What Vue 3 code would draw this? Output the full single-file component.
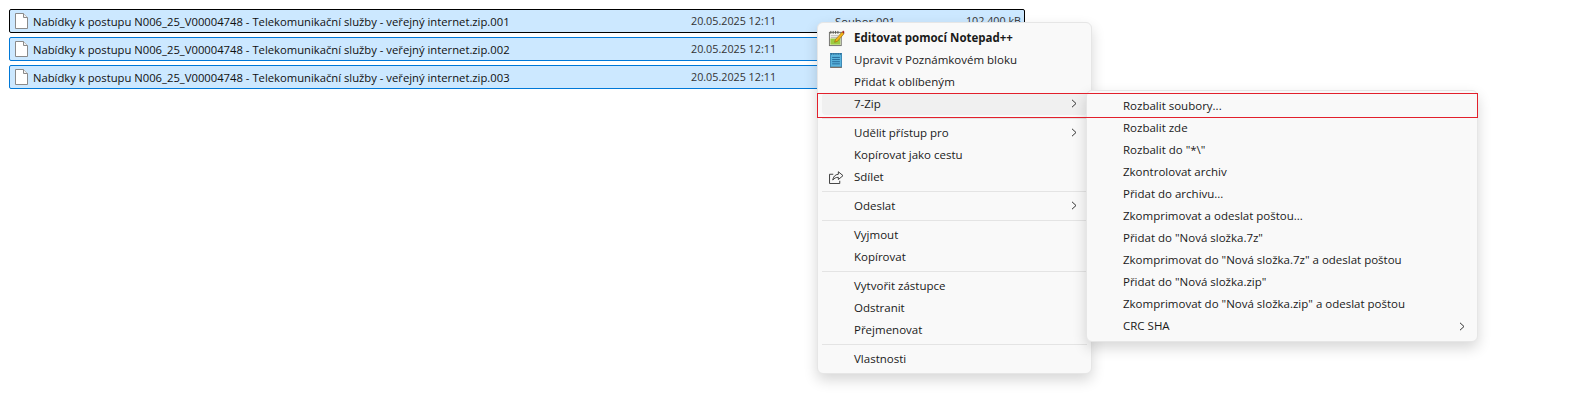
<script setup>
const rows = ['001', '002', '003'];
const name = 'Nabídky k postupu N006_25_V00004748 - Telekomunikační služby - veřejný internet.zip.';
const mainMenu = [
  { label: 'Editovat pomocí Notepad++', icon: 'npp', bold: true },
  { label: 'Upravit v Poznámkovém bloku', icon: 'note' },
  { label: 'Přidat k oblíbeným' },
  { label: '7-Zip', sub: true, active: true },
  { sep: true },
  { label: 'Udělit přístup pro', sub: true },
  { label: 'Kopírovat jako cestu' },
  { label: 'Sdílet', icon: 'share' },
  { sep: true },
  { label: 'Odeslat', sub: true },
  { sep: true },
  { label: 'Vyjmout' },
  { label: 'Kopírovat' },
  { sep: true },
  { label: 'Vytvořit zástupce' },
  { label: 'Odstranit' },
  { label: 'Přejmenovat' },
  { sep: true },
  { label: 'Vlastnosti' },
];
const subMenu = [
  { label: 'Rozbalit soubory...' },
  { label: 'Rozbalit zde' },
  { label: 'Rozbalit do "*\\"' },
  { label: 'Zkontrolovat archiv' },
  { label: 'Přidat do archivu...' },
  { label: 'Zkomprimovat a odeslat poštou...' },
  { label: 'Přidat do "Nová složka.7z"' },
  { label: 'Zkomprimovat do "Nová složka.7z" a odeslat poštou' },
  { label: 'Přidat do "Nová složka.zip"' },
  { label: 'Zkomprimovat do "Nová složka.zip" a odeslat poštou' },
  { label: 'CRC SHA', sub: true },
];
</script>

<template>
  <div class="page">
    <div class="list">
      <div v-for="(r, i) in rows" :key="r" class="row" :class="{ focused: i === 0 }">
        <svg class="file" width="13" height="16" viewBox="0 0 13 16">
          <path d="M.5.5h8l4 4v11H.5z" fill="#fff" stroke="#8a8a8a" />
          <path d="M8.5.5v4h4" fill="#f2f2f2" stroke="#8a8a8a" />
        </svg>
        <span class="name">{{ name + r }}</span>
        <span class="date">20.05.2025 12:11</span>
        <template v-if="i === 0">
          <span class="type">Soubor {{ r }}</span>
          <span class="size">102 400 kB</span>
        </template>
      </div>
    </div>

    <div class="menu main">
      <template v-for="(m, i) in mainMenu" :key="i">
        <div v-if="m.sep" class="sep"></div>
        <div v-else class="item" :class="{ active: m.active, bold: m.bold }">
          <span class="ico">
            <svg v-if="m.icon === 'npp'" width="17" height="17" viewBox="0 0 18 18">
              <rect x="1.500" y="2.500" width="12.500" height="14" fill="#f4f4ee" stroke="#6f6f6a" />
              <rect x="2.500" y="9" width="10.500" height="6.500" fill="#9ccb3f" />
              <path d="M3 1v3M5.500 1v3M8 1v3M10.500 1v3" stroke="#55554f" />
              <path d="M3 6h8M3 8h7" stroke="#b9b9b0" />
              <path d="M7 13l1-3 7-8 2 2-7 8z" fill="#f2b416" stroke="#8a5a0a" stroke-width=".6" />
              <path d="M15 2l1-1.500 1.500 1.500-1 2z" fill="#a3201d" />
            </svg>
            <svg v-else-if="m.icon === 'note'" width="12" height="16" viewBox="0 0 14 18">
              <rect x=".5" y="1.500" width="13" height="16" fill="#5ab4dd" stroke="#2f7fb0" />
              <path d="M2 1v2M4.500 1v2M7 1v2M9.500 1v2M12 1v2" stroke="#26567a" />
              <path d="M2.500 6h9M2.500 8.500h9M2.500 11h9M2.500 13.500h9" stroke="#1e5f8f" />
              <path d="M.5 17.500h13" stroke="#8a5a3a" />
            </svg>
            <svg v-else-if="m.icon === 'share'" width="15" height="13" viewBox="0 0 16 14" fill="none" stroke="#333" stroke-width="1">
              <path d="M4.500 3.500H.5v10h11v-3" />
              <path d="M10 .8l5 4.200-5 4.200V6.800c-2.500 0-4.500.8-6 3 .3-3.500 2.500-6 6-6.300z" />
            </svg>
          </span>
          <span class="label">{{ m.label }}</span>
          <svg v-if="m.sub" class="chev" width="6" height="9" viewBox="0 0 6 9" fill="none" stroke="#333" stroke-width="1">
            <path d="M1 .8l4 3.700-4 3.700" />
          </svg>
        </div>
      </template>
    </div>

    <div class="menu second">
      <div v-for="(m, i) in subMenu" :key="i" class="item">
        <span class="label">{{ m.label }}</span>
        <svg v-if="m.sub" class="chev" width="6" height="9" viewBox="0 0 6 9" fill="none" stroke="#333" stroke-width="1">
          <path d="M1 .8l4 3.700-4 3.700" />
        </svg>
      </div>
    </div>

    <div class="redbox"></div>
  </div>
</template>

<style>
html, body { margin: 0; background: #fff; }
</style>

<style scoped>
.page {
  position: relative;
  width: 1582px;
  height: 403px;
  overflow: hidden;
  background: #fff;
  font-family: "Open Sans", "Noto Sans", sans-serif;
  font-size: 11.5px;
  color: #1a1a1a;
}
.list {
  display: flex;
  flex-direction: column;
  gap: 4px;
  width: 1016px;
  padding: 9px 0 0 9px;
}
.row {
  display: flex;
  align-items: center;
  height: 24px;
  box-sizing: border-box;
  background: #cce8ff;
  border: 1px solid #0078d7;
  border-radius: 2px;
  color: #101010;
  font-size: 11.25px;
}
.row.focused { border-color: #000; }
.file { margin: 0 5px; flex: none; }
.name { width: 658px; white-space: nowrap; flex: none; }
.date { width: 144px; flex: none; color: #333; font-size: 10.75px; }
.type { flex: none; color: #333; }
.size { margin-left: auto; margin-right: 3px; flex: none; color: #333; white-space: nowrap; font-size: 10.75px; }

.menu {
  position: absolute;
  box-sizing: border-box;
  background: #f9f9f9;
  border: 1px solid #e6e6e6;
  border-radius: 6px;
  box-shadow: 0 6px 14px rgba(0, 0, 0, 0.16);
}
.main {
  left: 817px;
  top: 22px;
  width: 275px;
  height: 352px;
  padding: 4px;
}
.second {
  left: 1086px;
  top: 90px;
  width: 392px;
  height: 252px;
  padding: 5px 4px 4px 4px;
}
.item {
  display: flex;
  align-items: center;
  height: 22px;
  border-radius: 4px;
  position: relative;
}
.item.active { background: #f0f0f0; }
.item.bold .label { font-weight: 700; }
.main .ico {
  box-sizing: border-box;
  width: 32px;
  padding-right: 4px;
  flex: none;
  display: flex;
  justify-content: center;
  align-items: center;
}
.second .label { margin-left: 32px; padding-bottom: 3px; }
.main .label { padding-bottom: 2px; }
.label { white-space: nowrap; color: #1a1a1a; }
.chev { position: absolute; right: 10px; top: 6px; }
.second .chev { right: 8px; }
.sep {
  height: 1px;
  margin: 3px 0;
  background: #e4e4e4;
}
.redbox {
  position: absolute;
  left: 817px;
  top: 93px;
  width: 661px;
  height: 25px;
  box-sizing: border-box;
  border: 1px solid #e2202c;
}
</style>
